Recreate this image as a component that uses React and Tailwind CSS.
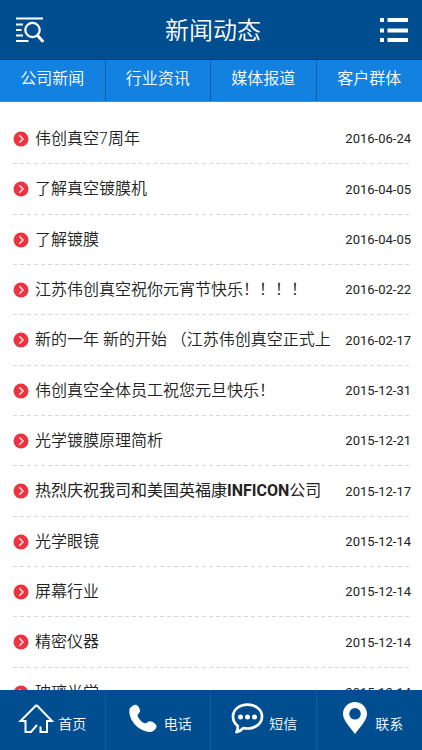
const TABS = ['公司新闻', '行业资讯', '媒体报道', '客户群体'];

const NEWS = [
  { id: 1, title: '伟创真空7周年', date: '2016-06-24' },
  { id: 2, title: '了解真空镀膜机', date: '2016-04-05' },
  { id: 3, title: '了解镀膜', date: '2016-04-05' },
  { id: 4, title: '江苏伟创真空祝你元宵节快乐！！！！', date: '2016-02-22' },
  { id: 5, title: '新的一年 新的开始 （江苏伟创真空正式上', date: '2016-02-17' },
  { id: 6, title: '伟创真空全体员工祝您元旦快乐！', date: '2015-12-31' },
  { id: 7, title: '光学镀膜原理简析', date: '2015-12-21' },
  { id: 8, title: <>热烈庆祝我司和美国英福康<b>INFICON</b>公司</>, date: '2015-12-17', hot: true },
  { id: 9, title: '光学眼镜', date: '2015-12-14' },
  { id: 10, title: '屏幕行业', date: '2015-12-14' },
  { id: 11, title: '精密仪器', date: '2015-12-14' },
  { id: 12, title: '玻璃光学', date: '2015-12-14' },
];

// --- Icons ---
const SearchListIcon = () => (
  <svg width="28" height="26" viewBox="0 0 28 26" fill="none" stroke="currentColor" strokeWidth="2" aria-hidden="true">
    <path d="M0 1.5h27M0 7.5h7M0 13h5.5M0 18.5h7M0 24h12.5" />
    <circle cx="16.5" cy="13" r="7.2" strokeWidth="2.2" />
    <path d="M21.5 18.5l5 5.5" strokeWidth="3" strokeLinecap="round" />
  </svg>
);

const MenuIcon = () => (
  <svg width="28" height="26" viewBox="0 0 28 26" fill="currentColor" aria-hidden="true">
    <path d="M0 1h4v4H0zM7.5 1H28v4H7.5zM0 11.5h4v4H0zM7.5 11.5H28v4H7.5zM0 21h4v4H0zM7.5 21H28v4H7.5z" />
  </svg>
);

const BulletIcon = () => (
  <svg className="shrink-0" width="16" height="16" viewBox="0 0 16 16" aria-hidden="true">
    <circle cx="8" cy="8" r="7.5" fill="#ee3340" />
    <path d="M6.3 4.3L10 8l-3.7 3.7" fill="none" stroke="#ffd9dc" strokeWidth="1.6" />
  </svg>
);

const HomeIcon = () => (
  <svg width="38" height="32" viewBox="0 0 38 32" fill="none" stroke="currentColor" strokeWidth="2" aria-hidden="true">
    <path d="M18.5 3L34 19h-5v11h-6.5v-5.5M18.5 3L2.500 19h5v11h5.500l6-7" />
  </svg>
);

const PhoneIcon = () => (
  <svg width="38" height="32" viewBox="0 0 38 32" fill="currentColor" aria-hidden="true">
    <path d="M5.500 7C7 4.500 10 2.500 12 2.800C14 3.500 16 6.500 16 9C16 11 13.500 11.500 13.500 13.500C14.500 17 18 20.500 21 21.300C23 21.300 24 19.300 26 19.300C29 19.500 32 22 32.600 24.200C32.300 27 29.500 29.700 26 30C14 29 4 18 5.500 7z" />
  </svg>
);

const MessageIcon = () => (
  <svg width="38" height="32" viewBox="0 0 38 32" aria-hidden="true">
    <path
      d="M18.500 2.700C26.500 2.700 33 7.500 33 14.500S26.500 26.500 18.500 26.500C17 26.500 16 26.400 14.500 26C12.500 28 10.500 29.500 7.500 30.200C8.500 28.500 9 27 8.800 24C5.500 21.500 4 18.500 4 14.500C4 7.500 10.500 2.700 18.500 2.700z"
      fill="none"
      stroke="currentColor"
      strokeWidth="2.700"
      strokeLinejoin="round"
    />
    <g fill="currentColor">
      <circle cx="11.500" cy="15" r="2.500" />
      <circle cx="18.500" cy="15" r="2.500" />
      <circle cx="25.500" cy="15" r="2.500" />
    </g>
  </svg>
);

const PinIcon = () => (
  <svg width="38" height="32" viewBox="0 0 38 32" fill="currentColor" fillRule="evenodd" aria-hidden="true">
    <path d="M20 0C26.800 0 32 5.200 32 12C32 18 26 24 20 32C14 24 8 18 8 12C8 5.200 13.200 0 20 0zM20 6a5.800 5.800 0 1 0 0 11.600a5.800 5.800 0 1 0 0-11.600z" />
  </svg>
);

const BOTTOM_LINKS = [
  { label: '首页', Icon: HomeIcon },
  { label: '电话', Icon: PhoneIcon },
  { label: '短信', Icon: MessageIcon },
  { label: '联系', Icon: PinIcon },
];

function Header() {
  return (
    <header className="flex h-[59px] items-center justify-between bg-[#004e90] px-[14px] text-white">
      <button type="button" aria-label="搜索" className="px-0.5">
        <SearchListIcon />
      </button>
      <h1 className="pt-0.5 text-2xl font-[350]">新闻动态</h1>
      <button type="button" aria-label="菜单">
        <MenuIcon />
      </button>
    </header>
  );
}

function Tabs() {
  return (
    <nav className="grid h-[43px] grid-cols-4 border-t border-b border-t-[#003c75] border-b-[#3f8fd4] bg-[#1381e0]">
      {TABS.map((tab) => (
        <a
          key={tab}
          href="#"
          className="flex items-center justify-center border-r border-[#0a5dab] pb-1 font-[350] text-white last:border-r-0"
        >
          {tab}
        </a>
      ))}
    </nav>
  );
}

function NewsItem({ item }) {
  return (
    <li className="flex flex-1 bg-[repeating-linear-gradient(90deg,#d8d8d8_0_4px,transparent_4px_7px)] bg-[length:100%_1px] bg-bottom bg-no-repeat">
      <a href="#" className="flex min-w-0 flex-1 items-center">
        <BulletIcon />
        <span
          className={`ml-1.5 min-w-0 flex-1 overflow-hidden whitespace-nowrap text-[#222] ${item.hot ? 'font-normal' : 'font-[350]'}`}
        >
          {item.title}
        </span>
        <time className="ml-1 text-[13px] text-[#222]">{item.date}</time>
      </a>
    </li>
  );
}

function BottomBar() {
  return (
    <footer className="fixed inset-x-0 bottom-0 grid h-15 grid-cols-4 bg-[#004e90] text-white">
      {BOTTOM_LINKS.map(({ label, Icon }) => (
        <a
          key={label}
          href="#"
          className="flex items-end justify-center gap-0.5 border-r border-[#0c5ba6] pb-4 text-sm font-[350] last:border-r-0"
        >
          <Icon />
          {label}
        </a>
      ))}
    </footer>
  );
}

function App() {
  return (
    <div className="flex min-h-screen flex-col bg-white pb-8 font-[Roboto,'Noto_Sans_CJK_SC',sans-serif]">
      <Header />
      <Tabs />
      <ul className="flex flex-1 flex-col pt-3 pr-[11px] pl-[13px]">
        {NEWS.map((item) => (
          <NewsItem key={item.id} item={item} />
        ))}
      </ul>
      <BottomBar />
    </div>
  );
}

export default App;
